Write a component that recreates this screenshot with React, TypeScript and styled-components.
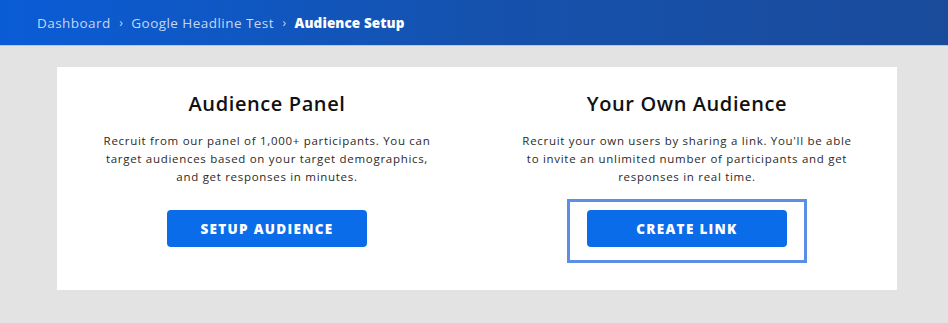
import styled, { createGlobalStyle } from "styled-components";

const GlobalStyle = createGlobalStyle`
  html, body {
    margin: 0;
    padding: 0;
    background: #e3e3e3;
    font-family: "Open Sans", "Liberation Sans", sans-serif;
  }
`;

const Page = styled.div`
  width: 948px;
  height: 323px;
  background: #e3e3e3;
  overflow: hidden;
`;

const Header = styled.div`
  height: 46px;
  box-sizing: border-box;
  background: linear-gradient(90deg, #0a5cd6 0%, #1552ae 50%, #1a4b9b 100%);
  border-bottom: 1px solid #b9c8e2;
  display: flex;
  align-items: center;
  padding-left: 37px;
  gap: 8.5px;
  font-size: 13.5px;
`;

const Crumb = styled.span<{ current?: boolean }>`
  color: ${(p) => (p.current ? "#ffffff" : "#c5d6f2")};
  font-weight: ${(p) => (p.current ? 800 : 400)};
  letter-spacing: ${(p) => (p.current ? "0.1px" : "0.45px")};
`;

const Sep = styled.span`
  color: #c5d6f2;
  font-size: 12px;
`;

const Card = styled.div`
  margin: 21px 0 0 57px;
  width: 840px;
  height: 223px;
  background: #ffffff;
  display: grid;
  grid-template-columns: 1fr 1fr;
  box-sizing: border-box;
  padding-top: 22px;
`;

const Column = styled.div`
  display: flex;
  flex-direction: column;
  align-items: center;
  text-align: center;
`;

const Title = styled.h2`
  margin: 0;
  font-size: 20px;
  font-weight: 600;
  color: #111;
  line-height: 30px;
  letter-spacing: 0.6px;
`;

const Desc = styled.p`
  margin: 13px 0 0;
  width: 345px;
  font-size: 11.5px;
  line-height: 18px;
  color: #2a2a2a;
  letter-spacing: 0.7px;
`;

const FocusRing = styled.div<{ focused?: boolean }>`
  margin-top: 13px;
  padding: 8px 17px 13px;
  border: 3px solid ${(p) => (p.focused ? "#5b8fe3" : "transparent")};
`;

const Button = styled.button`
  display: block;
  width: 200px;
  height: 37px;
  border: none;
  border-radius: 4px;
  background: #0a6ce9;
  color: #ffffff;
  font-family: "Open Sans", "Liberation Sans", sans-serif;
  font-size: 13.5px;
  font-weight: 800;
  letter-spacing: 1.3px;
  cursor: pointer;
`;

export default function App() {
  return (
    <Page>
      <GlobalStyle />
      <Header>
        <Crumb>Dashboard</Crumb>
        <Sep>›</Sep>
        <Crumb>Google Headline Test</Crumb>
        <Sep>›</Sep>
        <Crumb current>Audience Setup</Crumb>
      </Header>
      <Card>
        <Column>
          <Title>Audience Panel</Title>
          <Desc>
            Recruit from our panel of 1,000+ participants. You can target
            audiences based on your target demographics, and get responses in
            minutes.
          </Desc>
          <FocusRing>
            <Button>SETUP AUDIENCE</Button>
          </FocusRing>
        </Column>
        <Column>
          <Title>Your Own Audience</Title>
          <Desc>
            Recruit your own users by sharing a link. You'll be able to invite
            an unlimited number of participants and get responses in real time.
          </Desc>
          <FocusRing focused>
            <Button>CREATE LINK</Button>
          </FocusRing>
        </Column>
      </Card>
    </Page>
  );
}
